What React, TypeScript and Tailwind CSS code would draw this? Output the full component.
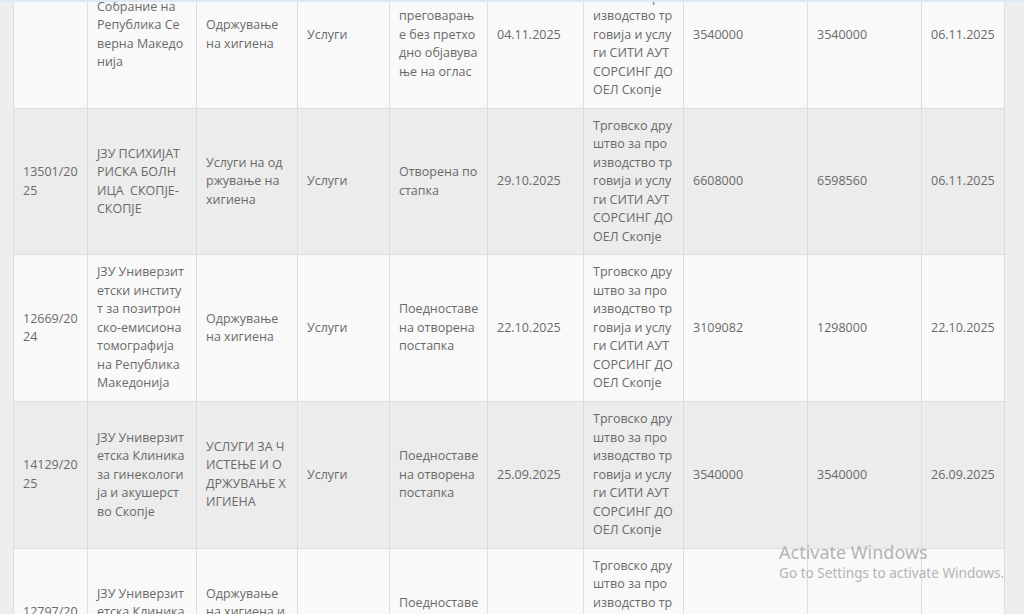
const cols = [74, 109, 101, 92, 98, 96, 100, 124, 114, 83];

const supplier = [
  "Трговско дру",
  "штво за про",
  "изводство тр",
  "говија и услу",
  "ги СИТИ АУТ",
  "СОРСИНГ ДО",
  "ОЕЛ Скопје",
];

type Row = string[][];

const rows: Row[] = [
  [
    [],
    ["Собрание на", "Република Се", "верна Македо", "нија"],
    ["Одржување", "на хигиена"],
    ["Услуги"],
    ["Постапка со", "преговарањ", "е без претхо", "дно објавува", "ње на оглас"],
    ["04.11.2025"],
    supplier,
    ["3540000"],
    ["3540000"],
    ["06.11.2025"],
  ],
  [
    ["13501/20", "25"],
    ["ЈЗУ ПСИХИЈАТ", "РИСКА БОЛН", "ИЦА  СКОПЈЕ-", "СКОПЈЕ"],
    ["Услуги на од", "ржување на", "хигиена"],
    ["Услуги"],
    ["Отворена по", "стапка"],
    ["29.10.2025"],
    supplier,
    ["6608000"],
    ["6598560"],
    ["06.11.2025"],
  ],
  [
    ["12669/20", "24"],
    [
      "ЈЗУ Универзит",
      "етски институ",
      "т за позитрон",
      "ско-емисиона",
      "томографија",
      "на Република",
      "Македонија",
    ],
    ["Одржување", "на хигиена"],
    ["Услуги"],
    ["Поедноставе", "на отворена", "постапка"],
    ["22.10.2025"],
    supplier,
    ["3109082"],
    ["1298000"],
    ["22.10.2025"],
  ],
  [
    ["14129/20", "25"],
    ["ЈЗУ Универзит", "етска Клиника", "за гинекологи", "ја и акушерст", "во Скопје"],
    ["УСЛУГИ ЗА Ч", "ИСТЕЊЕ И О", "ДРЖУВАЊЕ Х", "ИГИЕНА"],
    ["Услуги"],
    ["Поедноставе", "на отворена", "постапка"],
    ["25.09.2025"],
    supplier,
    ["3540000"],
    ["3540000"],
    ["26.09.2025"],
  ],
  [
    ["12797/20", "25"],
    ["ЈЗУ Универзит", "етска Клиника", "за детски бо", "лести Скопје"],
    ["Одржување", "на хигиена и", "чистење на п", "росторите"],
    ["Услуги"],
    ["Поедноставе", "на отворена", "постапка"],
    ["18.09.2025"],
    supplier,
    ["2950000"],
    ["2950000"],
    ["19.09.2025"],
  ],
];

export default function App() {
  return (
    <div
      className="relative h-[614px] overflow-hidden bg-[#eeeeee] pl-[13px] pr-[20px] text-[12.5px] leading-[18.5px] text-[#6a6a6a]"
      style={{ fontFamily: '"Open Sans", "Noto Sans", sans-serif' }}
    >
      <table className="-mt-[39px] w-[991px] table-fixed border-collapse">
        <colgroup>
          {cols.map((w, i) => (
            <col key={i} style={{ width: w }} />
          ))}
        </colgroup>
        <tbody>
          {rows.map((row, r) => (
            <tr key={r} className={r % 2 === 0 ? "bg-[#f9f9f9]" : "bg-[#ececec]"}>
              {row.map((lines, c) => (
                <td
                  key={c}
                  className="h-[146.7px] border border-[#dddddd] px-[9px] py-2 align-middle"
                >
                  {lines.map((l, k) => (
                    <div key={k} className="whitespace-pre">
                      {l}
                    </div>
                  ))}
                </td>
              ))}
            </tr>
          ))}
        </tbody>
      </table>

      <div className="absolute left-0 right-0 top-0 h-[2px] bg-[#dfe9f3]" />

      <div
        className="absolute left-[779px] top-[540px] text-[#b4b4b4]"
        style={{ fontFamily: '"Noto Sans", "Open Sans", sans-serif' }}
      >
        <div className="text-[18px] leading-[24px]">Activate Windows</div>
        <div className="text-[13.6px] leading-[18px]">Go to Settings to activate Windows.</div>
      </div>
    </div>
  );
}
